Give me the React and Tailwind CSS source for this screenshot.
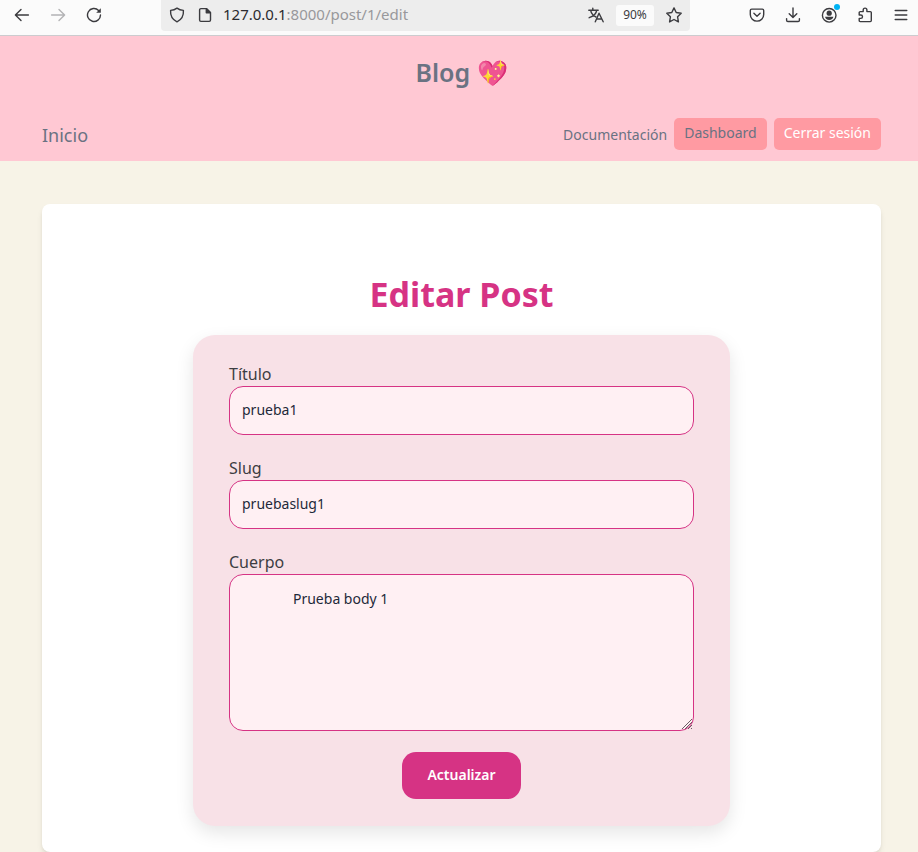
function Icon({ children, label }) {
  return (
    <svg
      viewBox="0 0 16 16"
      className="block size-4 shrink-0"
      fill="none"
      stroke="currentColor"
      strokeWidth="1.4"
      strokeLinecap="round"
      strokeLinejoin="round"
      role="img"
      aria-label={label}
    >
      {children}
    </svg>
  );
}

function BrowserBar() {
  return (
    <div className="flex h-9 items-start border-b border-[#cccccf] bg-[#fbfbfb] pr-[9px] pl-[14px] text-[#3b3b3f]">
      <div className="flex h-[30px] items-center gap-5">
        <button type="button" aria-label="Atrás">
          <Icon><path d="M14.4 8H1.6M7 2.4 1.4 8 7 13.6" /></Icon>
        </button>
        <button type="button" aria-label="Adelante" className="text-[#b3b3b5]">
          <Icon><path d="M1.6 8h12.8M9 2.4 14.6 8 9 13.6" /></Icon>
        </button>
        <button type="button" aria-label="Recargar">
          <Icon>
            <path d="M12.6 3.4A6.5 6.5 0 1 0 14.5 8" />
            <path d="M14.8 1.2v4.6h-4.6z" fill="currentColor" stroke="none" />
          </Icon>
        </button>
      </div>
      <div className="mx-[59px] flex h-[31px] min-w-0 flex-1 items-center rounded-b bg-[#ededed] px-2 pb-px">
        <Icon><path d="M8 1.1c1.9 1.5 4 2.2 6.4 2.300.4 5.200-1.700 9.200-6.400 11.500C3.300 12.600 1.200 8.600 1.600 3.400 4 3.300 6.100 2.600 8 1.100z" /></Icon>
        <span className="ml-3 flex">
          <Icon>
            <path d="M3.900 1.600h5.600l4 4v7.500a1.300 1.300 0 0 1-1.300 1.300H3.900a1.300 1.300 0 0 1-1.300-1.300V2.900a1.300 1.300 0 0 1 1.300-1.300z" />
            <path d="M9.300 1.900v3.900h3.900z" fill="currentColor" />
          </Icon>
        </span>
        <span className="ml-[10px] flex-1 truncate pb-[2px] text-[15px] leading-5 text-[#2b2b2f]">
          127.0.0.1<span className="text-[#98989b]">:8000/post/1/edit</span>
        </span>
        <Icon>
          <path d="M.8 3.200h9.400M4.800 1.200v2M2.600 3.200C3.200 6.500 5.500 8.800 8 10M8.800 3.200C8.200 6.800 5 9.600 1.200 10.700" />
          <path d="m7.300 14.800 3.700-8.600 4.200 8.600M8.800 12h4.900" />
        </Icon>
        <button type="button" className="mx-3 h-[21px] w-[38px] rounded-[3px] bg-[#fbfbfb] text-xs text-[#3b3b3f]">
          90%
        </button>
        <Icon><path d="m8 .9 2.200 4.600 5 .7-3.600 3.600.8 5.100L8 12.500l-4.400 2.400.8-5.100L.8 6.200l5-.7z" /></Icon>
      </div>
      <div className="flex h-[30px] items-center gap-5">
        <Icon>
          <path d="M2.700 2.100h10.600a1.400 1.400 0 0 1 1.400 1.400V7.400a6.700 6.700 0 0 1-13.400 0V3.500a1.400 1.400 0 0 1 1.400-1.400z" />
          <path d="M4.900 6.300 8 9.200l3.100-2.900" />
        </Icon>
        <Icon><path d="M8 .9v9.500M4.200 6.800 8 10.600l3.800-3.800M1.600 11.600v1.600a1.300 1.300 0 0 0 1.300 1.300h10.200a1.300 1.300 0 0 0 1.300-1.300v-1.600" /></Icon>
        <span className="relative">
          <Icon>
            <circle cx="8.200" cy="8.300" r="6.800" />
            <circle cx="8.200" cy="6.200" r="2.600" fill="currentColor" stroke="none" />
            <path d="M4.100 9.800h8.200c0 1.900-1.900 3.200-4.100 3.200s-4.100-1.300-4.100-3.200z" fill="currentColor" stroke="none" />
          </Icon>
          <span className="absolute -top-[3px] -right-[3px] size-[6px] rounded-full bg-[#00b3f4]" />
        </span>
        <Icon>
          <path d="M2.200 8V5.600a1 1 0 0 1 1-1h3V3a1.800 1.800 0 0 1 3.700 0v1.600h3.400a1 1 0 0 1 1 1v8a1 1 0 0 1-1 1H3.200a1 1 0 0 1-1-1v-2.200h1.600a1.700 1.700 0 0 0 0-3.400z" />
        </Icon>
        <Icon><path d="M2.200 3.500h11.600M2.200 8h11.600M2.200 12.500h11.600" /></Icon>
      </div>
    </div>
  );
}

function Header() {
  return (
    <header className="bg-[#ffc8d3] pt-[18px] pr-[37px] pb-[11px] pl-[42px] text-gray-500">
      <h1 className="text-center text-[25px] leading-9 font-semibold">Blog 💖</h1>
      <nav className="mt-7 flex h-8 items-center">
        <a href="#inicio" className="pt-[2px] text-lg">Inicio</a>
        <div className="ml-auto flex items-center gap-[7px] text-sm">
          <a href="#documentacion" className="pt-[2px]">Documentación</a>
          <a href="#dashboard" className="h-8 rounded-[5px] bg-[#ff9aa2] px-[10px] pt-[5px]">Dashboard</a>
          <button type="button" className="h-8 rounded-[5px] bg-[#ff9aa2] px-[10px] pb-[2px] text-white">
            Cerrar sesión
          </button>
        </div>
      </nav>
    </header>
  );
}

const fieldClass =
  "block w-full rounded-[14px] border border-[#d63384] bg-[#fff0f3] px-3 text-sm text-gray-800";

function Field({ id, label, value }) {
  return (
    <div className="mb-[21px]">
      <label htmlFor={id} className="block leading-6">{label}</label>
      <input id={id} type="text" defaultValue={value} className={`${fieldClass} h-[49px] pb-[2px]`} />
    </div>
  );
}

export default function App() {
  return (
    <div className="bg-[#f7f3e7] font-['Noto_Sans',sans-serif]">
      <BrowserBar />
      <Header />
      <main className="pt-[43px] pr-[37px] pl-[42px]">
        <section className="rounded-lg bg-white px-5 pt-[67px] pb-[26px] shadow-md">
          <h2 className="text-center text-[34px] leading-[46px] font-bold text-[#d63384]">Editar Post</h2>
          <form className="mx-auto mt-[18px] max-w-[537px] rounded-[22px] bg-[#f8e1e7] px-9 py-[27px] text-[#3d3d42] shadow-[0_7px_18px_rgba(0,0,0,0.1)]">
            <Field id="titulo" label="Título" value="prueba1" />
            <Field id="slug" label="Slug" value="pruebaslug1" />
            <label htmlFor="cuerpo" className="block leading-6">Cuerpo</label>
            <div className="relative">
              <textarea
                id="cuerpo"
                defaultValue={" ".repeat(14) + "Prueba body 1"}
                className={`${fieldClass} h-[157px] py-[14px] [&::-webkit-resizer]:hidden`}
              />
              <svg
                viewBox="0 0 12 12"
                className="pointer-events-none absolute right-px bottom-px size-3"
                fill="none"
                stroke="#6e5f66"
                aria-hidden="true"
              >
                <path d="M1 11 11 1M4 11l7-7M7 11l4-4M10 11l1-1" />
              </svg>
            </div>
            <button
              type="submit"
              className="mx-auto mt-[21px] block h-[47px] rounded-[14px] bg-[#d63384] px-[25px] pb-[2px] text-sm font-semibold text-white"
            >
              Actualizar
            </button>
          </form>
        </section>
      </main>
    </div>
  );
}
